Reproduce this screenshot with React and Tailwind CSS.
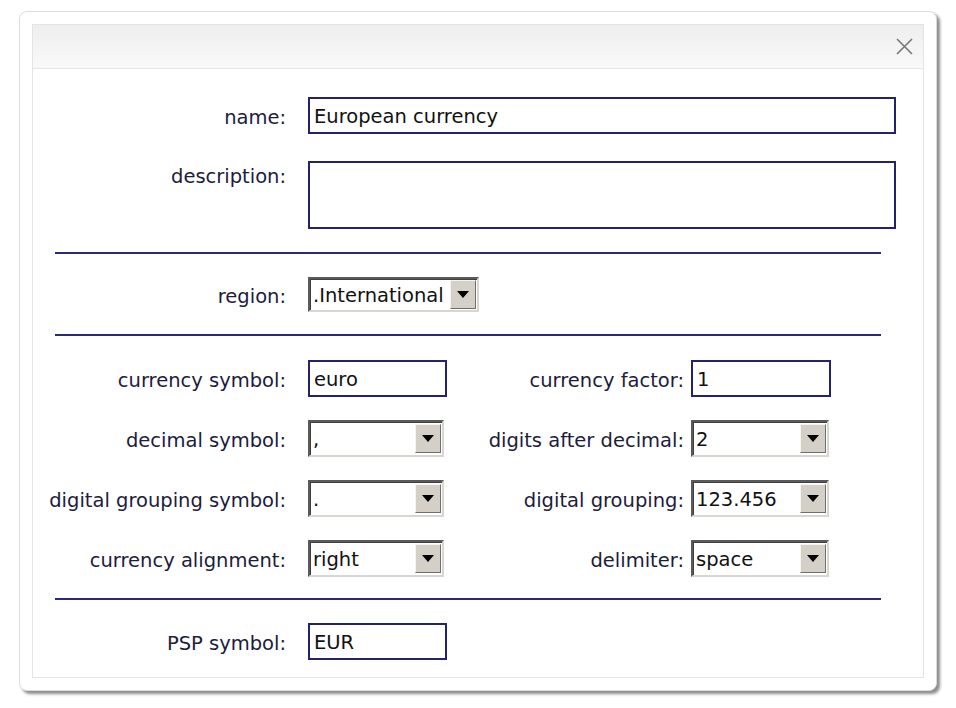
import React from 'react';

const font = { fontFamily: '"DejaVu Sans", Verdana, sans-serif' };

// windows-classic looking combo box
const Select = ({ value, width }) => (
  <div
    className={`${width} h-[37px] flex items-center justify-between bg-white border-2 border-t-[#5a5a5a] border-l-[#5a5a5a] border-b-[#d8d6d0] border-r-[#d8d6d0] shadow-[inset_1px_1px_0_#404040]`}
  >
    <span className="pl-[3px] pt-[3px] text-[19.5px] text-[#111] leading-none">{value}</span>
    <div className="w-[26px] h-[29px] mr-[1px] bg-[#d4d0c8] border border-t-[#f4f4f0] border-l-[#f4f4f0] border-b-[#6e6e6e] border-r-[#6e6e6e] flex items-center justify-center">
      <svg width="12" height="7" viewBox="0 0 12 7">
        <path d="M0 0 L12 0 L6 7 Z" fill="#000" />
      </svg>
    </div>
  </div>
);

const Input = ({ value = '', width, tall }) => (
  <div
    className={`${width} ${tall ? 'h-[68px] items-start' : 'h-[37px] items-center'} flex border-2 border-[#22226e] bg-white`}
  >
    <span className="pl-[4px] pt-[3px] text-[19.5px] text-[#111] leading-none">{value}</span>
  </div>
);

const Label = ({ children, width = 'w-[253px]' }) => (
  <div className={`${width} shrink-0 pt-[4px] text-right text-[19.5px] text-[#1c1c3c] leading-[24px]`}>{children}</div>
);

const Rule = () => <div className="ml-[22px] w-[826px] h-[2px] bg-[#2a2a7a]" />;

const PairRow = ({ left, right }) => (
  <div className="flex items-center">
    <Label>{left.label}</Label>
    <div className="ml-[22px] w-[139px]">{left.field}</div>
    <Label width="w-[237px]">{right.label}</Label>
    <div className="ml-[7px]">{right.field}</div>
  </div>
);

export default function App() {
  return (
    <div className="w-[956px] h-[708px] bg-white overflow-hidden" style={font}>
      <div className="ml-[19px] mt-[11px] w-[918px] h-[680px] bg-white border border-[#dcdcdc] rounded-[8px] shadow-[3px_3px_3px_rgba(0,0,0,0.45)] p-[12px]">
        <div className="w-full h-full border border-[#e4e4e4] flex flex-col">
          {/* header */}
          <div className="h-[44px] shrink-0 bg-gradient-to-b from-[#eeeeee] to-[#f9f9f9] border-b border-[#e6e6e6] flex items-center justify-end pr-[10px]">
            <svg width="17" height="17" viewBox="0 0 17 17">
              <path d="M1 1 L16 16 M16 1 L1 16" stroke="#777" strokeWidth="1.6" />
            </svg>
          </div>

          {/* form */}
          <div className="flex flex-col pt-[28px]">
            <div className="flex items-center">
              <Label>name:</Label>
              <div className="ml-[22px]">
                <Input value="European currency" width="w-[588px]" />
              </div>
            </div>

            <div className="flex items-start mt-[27px]">
              <Label>description:</Label>
              <div className="ml-[22px]">
                <Input width="w-[588px]" tall />
              </div>
            </div>

            <div className="mt-[23px]"><Rule /></div>

            <div className="flex items-center mt-[23px]">
              <Label>region:</Label>
              <div className="ml-[22px]">
                <Select value=".International" width="w-[171px] !h-[35px]" />
              </div>
            </div>

            <div className="mt-[22px]"><Rule /></div>

            <div className="flex flex-col gap-[23px] mt-[24px]">
              <PairRow
                left={{ label: 'currency symbol:', field: <Input value="euro" width="w-[139px]" /> }}
                right={{ label: 'currency factor:', field: <Input value="1" width="w-[140px]" /> }}
              />
              <PairRow
                left={{ label: 'decimal symbol:', field: <Select value="," width="w-[136px]" /> }}
                right={{ label: 'digits after decimal:', field: <Select value="2" width="w-[138px]" /> }}
              />
              <PairRow
                left={{ label: 'digital grouping symbol:', field: <Select value="." width="w-[136px]" /> }}
                right={{ label: 'digital grouping:', field: <Select value="123.456" width="w-[138px]" /> }}
              />
              <PairRow
                left={{ label: 'currency alignment:', field: <Select value="right" width="w-[136px]" /> }}
                right={{ label: 'delimiter:', field: <Select value="space" width="w-[138px]" /> }}
              />
            </div>

            <div className="mt-[21px]"><Rule /></div>

            <div className="flex items-center mt-[23px]">
              <Label>PSP symbol:</Label>
              <div className="ml-[22px]">
                <Input value="EUR" width="w-[139px]" />
              </div>
            </div>
          </div>
        </div>
      </div>
    </div>
  );
}
